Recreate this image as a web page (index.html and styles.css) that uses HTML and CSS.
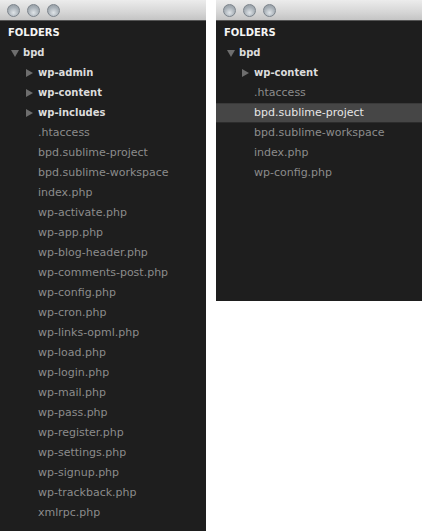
FILE: index.html
```html
<!DOCTYPE html>
<html>
<head>
<meta charset="utf-8">
<link rel="stylesheet" href="styles.css">
</head>
<body>
<div class="wrap">
  <div class="win left">
    <div class="titlebar"><span class="dot"></span><span class="dot"></span><span class="dot"></span></div>
    <div class="side">
      <div class="head">FOLDERS</div>
      <div class="row folder l1 open"><span class="arr"></span>bpd</div>
      <div class="row folder l2"><span class="arr"></span>wp-admin</div>
      <div class="row folder l2"><span class="arr"></span>wp-content</div>
      <div class="row folder l2"><span class="arr"></span>wp-includes</div>
      <div class="row file">.htaccess</div>
      <div class="row file">bpd.sublime-project</div>
      <div class="row file">bpd.sublime-workspace</div>
      <div class="row file">index.php</div>
      <div class="row file">wp-activate.php</div>
      <div class="row file">wp-app.php</div>
      <div class="row file">wp-blog-header.php</div>
      <div class="row file">wp-comments-post.php</div>
      <div class="row file">wp-config.php</div>
      <div class="row file">wp-cron.php</div>
      <div class="row file">wp-links-opml.php</div>
      <div class="row file">wp-load.php</div>
      <div class="row file">wp-login.php</div>
      <div class="row file">wp-mail.php</div>
      <div class="row file">wp-pass.php</div>
      <div class="row file">wp-register.php</div>
      <div class="row file">wp-settings.php</div>
      <div class="row file">wp-signup.php</div>
      <div class="row file">wp-trackback.php</div>
      <div class="row file">xmlrpc.php</div>
    </div>
  </div>
  <div class="win right">
    <div class="titlebar"><span class="dot"></span><span class="dot"></span><span class="dot"></span></div>
    <div class="side">
      <div class="head">FOLDERS</div>
      <div class="row folder l1 open"><span class="arr"></span>bpd</div>
      <div class="row folder l2"><span class="arr"></span>wp-content</div>
      <div class="row file">.htaccess</div>
      <div class="row file sel">bpd.sublime-project</div>
      <div class="row file">bpd.sublime-workspace</div>
      <div class="row file">index.php</div>
      <div class="row file">wp-config.php</div>
    </div>
  </div>
</div>
</body>
</html>
```
FILE: styles.css
```css
html, body { margin: 0; padding: 0; background: #fff; }
body { font-family: "DejaVu Sans", "Lucida Grande", sans-serif; font-size: 11px; }
.wrap { display: flex; gap: 10px; align-items: flex-start; }
.win { width: 206px; background: #1e1e1e; display: flex; flex-direction: column; }
.left { height: 531px; }
.right { height: 301px; }
.titlebar {
  height: 21px; box-sizing: border-box;
  background: linear-gradient(#ececec, #d6d6d6 60%, #c4c4c4);
  border-bottom: 1px solid #555;
  display: flex; align-items: center; gap: 7px; padding-left: 7px;
}
.dot {
  width: 13px; height: 13px; border-radius: 50%; box-sizing: border-box;
  border: 1px solid #7c848c;
  background: radial-gradient(circle at 50% 70%, #dfe4e8 0%, #a9b1b8 55%, #8d959c 100%);
}
.side { display: flex; flex-direction: column; padding-top: 2px; }
.head {
  height: 20px; line-height: 20px; padding-left: 8px;
  color: #f4f4f4; font-weight: bold; font-size: 10px;
}
.row { height: 20px; line-height: 20px; white-space: nowrap; display: flex; align-items: center; }
.folder { color: #dcdcdc; font-weight: bold; font-size: 10px; }
.file { color: #8c8c8c; padding-left: 38px; }
.l1 { padding-left: 11px; }
.l2 { padding-left: 26px; }
.arr {
  width: 0; height: 0; margin-right: 5px;
  border-top: 4px solid transparent; border-bottom: 4px solid transparent;
  border-left: 7px solid #6e6e6e;
}
.open .arr {
  border-left: 4px solid transparent; border-right: 4px solid transparent;
  border-top: 7px solid #6e6e6e; border-bottom: 0; margin-right: 4px;
}
.sel {
  background: #464646; color: #e6e6e6;
  border-top: 1px solid #3a3a3a; border-bottom: 1px solid #2c2c2c;
  box-sizing: border-box;
}
```
